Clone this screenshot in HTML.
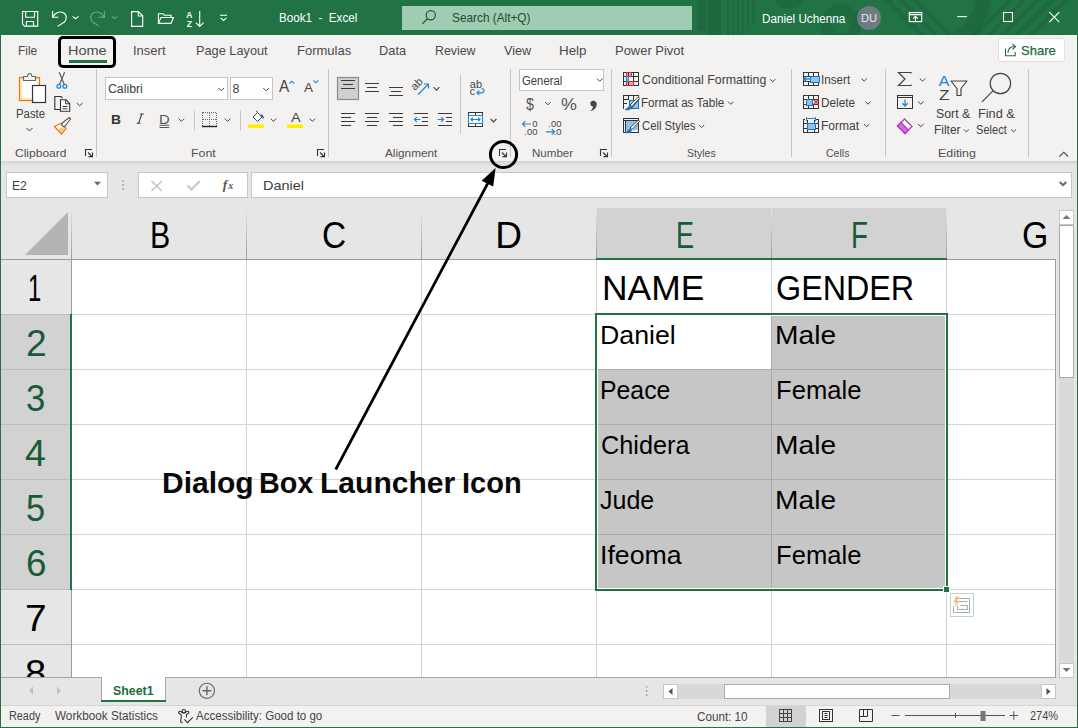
<!DOCTYPE html>
<html><head><meta charset="utf-8">
<style>
*{margin:0;padding:0;box-sizing:border-box}
html,body{width:1078px;height:728px;overflow:hidden;background:#fff;font-family:"Liberation Sans",sans-serif}
.a{position:absolute;display:block}
.t{position:absolute;white-space:pre;line-height:1}
svg{overflow:visible}
</style></head><body>
<div class="a" style="left:0px;top:0px;width:1078px;height:35px;background:#217346;"></div>
<div class="a" style="left:0px;top:35px;width:1078px;height:126px;background:#f3f2f1;"></div>
<div class="a" style="left:0px;top:161px;width:1078px;height:47px;background:#e6e6e6;"></div>
<div class="a" style="left:0px;top:161px;width:1078px;height:5px;background:linear-gradient(#d2d2d2,#e6e6e6);"></div>
<div class="a" style="left:0px;top:208px;width:1078px;height:51px;background:#e6e6e6;"></div>
<div class="a" style="left:0px;top:259px;width:71px;height:418px;background:#e6e6e6;"></div>
<div class="a" style="left:72px;top:260px;width:983px;height:417px;background:#fff;"></div>
<div class="a" style="left:596px;top:208px;width:350px;height:51px;background:#d2d2d2;"></div>
<div class="a" style="left:0px;top:315px;width:71px;height:274px;background:#d2d2d2;"></div>
<div class="a" style="left:72px;top:314px;width:983px;height:1px;background:#d4d4d4;"></div>
<div class="a" style="left:72px;top:369px;width:983px;height:1px;background:#d4d4d4;"></div>
<div class="a" style="left:72px;top:424px;width:983px;height:1px;background:#d4d4d4;"></div>
<div class="a" style="left:72px;top:479px;width:983px;height:1px;background:#d4d4d4;"></div>
<div class="a" style="left:72px;top:534px;width:983px;height:1px;background:#d4d4d4;"></div>
<div class="a" style="left:72px;top:589px;width:983px;height:1px;background:#d4d4d4;"></div>
<div class="a" style="left:72px;top:644px;width:983px;height:1px;background:#d4d4d4;"></div>
<div class="a" style="left:246px;top:260px;width:1px;height:417px;background:#d4d4d4;"></div>
<div class="a" style="left:421px;top:260px;width:1px;height:417px;background:#d4d4d4;"></div>
<div class="a" style="left:596px;top:260px;width:1px;height:417px;background:#d4d4d4;"></div>
<div class="a" style="left:771px;top:260px;width:1px;height:417px;background:#d4d4d4;"></div>
<div class="a" style="left:946px;top:260px;width:1px;height:417px;background:#d4d4d4;"></div>
<div class="a" style="left:71px;top:208px;width:1px;height:51px;background:linear-gradient(#e6e6e6,#9b9b9b);"></div>
<div class="a" style="left:246px;top:208px;width:1px;height:51px;background:linear-gradient(#e6e6e6,#9b9b9b);"></div>
<div class="a" style="left:421px;top:208px;width:1px;height:51px;background:linear-gradient(#e6e6e6,#9b9b9b);"></div>
<div class="a" style="left:596px;top:208px;width:1px;height:51px;background:linear-gradient(#e6e6e6,#9b9b9b);"></div>
<div class="a" style="left:771px;top:208px;width:1px;height:51px;background:linear-gradient(#e6e6e6,#9b9b9b);"></div>
<div class="a" style="left:946px;top:208px;width:1px;height:51px;background:linear-gradient(#e6e6e6,#9b9b9b);"></div>
<div class="a" style="left:0px;top:259px;width:1055px;height:1px;background:#9b9b9b;"></div>
<div class="a" style="left:71px;top:259px;width:1px;height:418px;background:#9b9b9b;"></div>
<div class="a" style="left:0px;top:314px;width:71px;height:1px;background:#bdbdbd;"></div>
<div class="a" style="left:0px;top:369px;width:71px;height:1px;background:#bdbdbd;"></div>
<div class="a" style="left:0px;top:424px;width:71px;height:1px;background:#bdbdbd;"></div>
<div class="a" style="left:0px;top:479px;width:71px;height:1px;background:#bdbdbd;"></div>
<div class="a" style="left:0px;top:534px;width:71px;height:1px;background:#bdbdbd;"></div>
<div class="a" style="left:0px;top:589px;width:71px;height:1px;background:#bdbdbd;"></div>
<div class="a" style="left:0px;top:644px;width:71px;height:1px;background:#bdbdbd;"></div>
<svg class="a" style="left:0px;top:208px;" width="71" height="51" viewBox="0 0 71 51"><polygon points="25,47 68,4 68,47" fill="#b4b4b4"/></svg>
<div class="a" style="left:596px;top:258px;width:351px;height:2px;background:#217346;"></div>
<div class="a" style="left:70px;top:314px;width:2px;height:276px;background:#217346;"></div>
<div class="a" style="left:596px;top:314px;width:351px;height:276px;background:#fff;"></div>
<div class="a" style="left:598px;top:316px;width:347px;height:272px;background:#c6c6c6;"></div>
<div class="a" style="left:597px;top:315px;width:174px;height:54px;background:#fff;"></div>
<div class="a" style="left:598px;top:369px;width:347px;height:1px;background:#ababab;"></div>
<div class="a" style="left:598px;top:424px;width:347px;height:1px;background:#ababab;"></div>
<div class="a" style="left:598px;top:479px;width:347px;height:1px;background:#ababab;"></div>
<div class="a" style="left:598px;top:534px;width:347px;height:1px;background:#ababab;"></div>
<div class="a" style="left:771px;top:316px;width:1px;height:272px;background:#ababab;"></div>
<div class="a" style="left:595px;top:313px;width:353px;height:2px;background:#217346;"></div>
<div class="a" style="left:595px;top:589px;width:353px;height:2px;background:#217346;"></div>
<div class="a" style="left:595px;top:313px;width:2px;height:278px;background:#217346;"></div>
<div class="a" style="left:946px;top:313px;width:2px;height:278px;background:#217346;"></div>
<div class="a" style="left:943px;top:586px;width:7px;height:7px;background:#fff;"></div>
<div class="a" style="left:944px;top:587px;width:5px;height:5px;background:#217346;"></div>
<div class="a" style="left:1055px;top:259px;width:1px;height:419px;background:#9b9b9b;"></div>
<div class="t" style="left:149.54px;top:217.00px;font-size:37.00px;color:#000;transform:scaleX(0.8203);transform-origin:0 0;">B</div>
<div class="t" style="left:322.21px;top:217.00px;font-size:37.00px;color:#000;transform:scaleX(0.9021);transform-origin:0 0;">C</div>
<div class="t" style="left:495.20px;top:217.00px;font-size:37.00px;color:#000;">D</div>
<div class="t" style="left:675.81px;top:217.00px;font-size:37.00px;color:#185c37;transform:scaleX(0.7304);transform-origin:0 0;">E</div>
<div class="t" style="left:850.65px;top:217.00px;font-size:37.00px;color:#185c37;transform:scaleX(0.7503);transform-origin:0 0;">F</div>
<div class="t" style="left:1021.80px;top:217.00px;font-size:37.00px;color:#000;transform:scaleX(0.9149);transform-origin:0 0;">G</div>
<div class="t" style="left:27.93px;top:270.00px;font-size:37.00px;color:#000;transform:scaleX(0.6450);transform-origin:0 0;">1</div>
<div class="t" style="left:25.74px;top:325.00px;font-size:37.00px;color:#185c37;transform:scaleX(1.0059);transform-origin:0 0;">2</div>
<div class="t" style="left:26.21px;top:380.00px;font-size:37.00px;color:#185c37;transform:scaleX(0.9362);transform-origin:0 0;">3</div>
<div class="t" style="left:25.24px;top:435.00px;font-size:37.00px;color:#185c37;transform:scaleX(1.0133);transform-origin:0 0;">4</div>
<div class="t" style="left:26.22px;top:490.00px;font-size:37.00px;color:#185c37;transform:scaleX(0.9296);transform-origin:0 0;">5</div>
<div class="t" style="left:25.64px;top:545.00px;font-size:37.00px;color:#185c37;transform:scaleX(0.9927);transform-origin:0 0;">6</div>
<div class="t" style="left:24.73px;top:600.00px;font-size:37.00px;color:#000;transform:scaleX(1.0489);transform-origin:0 0;">7</div>
<div class="t" style="left:25.46px;top:655.00px;font-size:37.00px;color:#000;transform:scaleX(1.0286);transform-origin:0 0;">8</div>
<div class="t" style="left:601.72px;top:270.00px;font-size:35.00px;color:#000;transform:scaleX(1.0116);transform-origin:0 0;">NAME</div>
<div class="t" style="left:776.38px;top:270.00px;font-size:35.00px;color:#000;transform:scaleX(0.9229);transform-origin:0 0;">GENDER</div>
<div class="t" style="left:600.45px;top:322.00px;font-size:26.40px;color:#000;transform:scaleX(1.0131);transform-origin:0 0;">Daniel</div>
<div class="t" style="left:775.23px;top:322.00px;font-size:26.40px;color:#000;transform:scaleX(1.0673);transform-origin:0 0;">Male</div>
<div class="t" style="left:600.20px;top:377.00px;font-size:26.40px;color:#000;transform:scaleX(0.9399);transform-origin:0 0;">Peace</div>
<div class="t" style="left:776.14px;top:377.00px;font-size:26.40px;color:#000;transform:scaleX(0.9702);transform-origin:0 0;">Female</div>
<div class="t" style="left:601.00px;top:432.00px;font-size:26.40px;color:#000;transform:scaleX(0.9578);transform-origin:0 0;">Chidera</div>
<div class="t" style="left:775.23px;top:432.00px;font-size:26.40px;color:#000;transform:scaleX(1.0673);transform-origin:0 0;">Male</div>
<div class="t" style="left:600.44px;top:487.00px;font-size:26.40px;color:#000;transform:scaleX(0.9474);transform-origin:0 0;">Jude</div>
<div class="t" style="left:775.23px;top:487.00px;font-size:26.40px;color:#000;transform:scaleX(1.0673);transform-origin:0 0;">Male</div>
<div class="t" style="left:599.80px;top:542.00px;font-size:26.40px;color:#000;transform:scaleX(1.0118);transform-origin:0 0;">Ifeoma</div>
<div class="t" style="left:776.14px;top:542.00px;font-size:26.40px;color:#000;transform:scaleX(0.9702);transform-origin:0 0;">Female</div>
<svg class="a" style="left:0px;top:0px;overflow:hidden;" width="1078" height="35" viewBox="0 0 1078 35">
<g fill="#000" fill-opacity="0.085">
<rect x="697" y="0" width="9" height="31"/>
<rect x="708" y="0" width="13" height="35"/>
<rect x="727" y="0" width="2" height="35"/><rect x="732" y="0" width="2" height="35"/>
<rect x="737" y="0" width="2" height="35"/><rect x="742" y="0" width="2" height="35"/>
<rect x="747" y="0" width="2" height="30"/><rect x="752" y="0" width="2" height="25"/>
<path d="M775.5 0 A14 8.5 0 0 0 803.5 0 Z"/>
<circle cx="840.5" cy="24.5" r="14.8" fill="none" stroke="#000" stroke-opacity="0.085" stroke-width="11"/>
<path d="M884 0 L890 0 L925 35 L919 35 Z"/><path d="M898 0 L904 0 L939 35 L933 35 Z"/>
<path d="M912 0 L918 0 L953 35 L947 35 Z"/>
<path d="M976 0 L991 0 C990 14 982 27 975 35 L952 35 C964 25 975 12 976 0 Z"/>
<path d="M1000 7 L1007 0 L1013 0 L978 35 L972 35 Z"/>
<path d="M1021 0 L1027 0 L992 35 L986 35 Z"/>
<path d="M1035 0 L1041 0 L1006 35 L1000 35 Z"/>
<path d="M1049 0 L1055 0 L1020 35 L1014 35 Z"/>
<path d="M1063 0 L1069 0 L1034 35 L1028 35 Z"/>
</g></svg>
<div class="t" style="left:279.10px;top:11.00px;font-size:13.00px;color:#fff;transform:scaleX(0.8958);transform-origin:0 0;">Book1  -  Excel</div>
<div class="a" style="left:402px;top:6px;width:290px;height:24px;background:#9fccb2;"></div>
<svg class="a" style="left:402px;top:0px;" width="50" height="35" viewBox="0 0 50 35"><circle cx="28.8" cy="15.3" r="4.6" fill="none" stroke="#1a5c36" stroke-width="1.2"/><path d="M25.5 18.7 L20.3 23.9" stroke="#1a5c36" stroke-width="1.3"/></svg>
<div class="t" style="left:451.85px;top:11.00px;font-size:13.00px;color:#1b4d31;transform:scaleX(0.9093);transform-origin:0 0;">Search (Alt+Q)</div>
<div class="t" style="left:762.46px;top:13.00px;font-size:12.50px;color:#fff;transform:scaleX(0.9352);transform-origin:0 0;">Daniel Uchenna</div>
<div class="a" style="left:857px;top:6px;width:24px;height:24px;border-radius:50%;background:#6e7b80"></div>
<div class="t" style="left:860.60px;top:13.00px;font-size:10.50px;color:#e8e8e8;transform:scaleX(1.0618);transform-origin:0 0;">DU</div>
<div class="t" style="left:17.62px;top:44.00px;font-size:13.50px;color:#4a4a4a;transform:scaleX(0.8840);transform-origin:0 0;">File</div>
<div class="t" style="left:67.93px;top:44.00px;font-size:13.50px;color:#4a4a4a;transform:scaleX(1.0725);transform-origin:0 0;">Home</div>
<div class="t" style="left:133.32px;top:44.00px;font-size:13.50px;color:#4a4a4a;transform:scaleX(0.9625);transform-origin:0 0;">Insert</div>
<div class="t" style="left:196.46px;top:44.00px;font-size:13.50px;color:#4a4a4a;transform:scaleX(0.9445);transform-origin:0 0;">Page Layout</div>
<div class="t" style="left:297.04px;top:44.00px;font-size:13.50px;color:#4a4a4a;transform:scaleX(0.9622);transform-origin:0 0;">Formulas</div>
<div class="t" style="left:379.45px;top:44.00px;font-size:13.50px;color:#4a4a4a;transform:scaleX(0.9520);transform-origin:0 0;">Data</div>
<div class="t" style="left:435.18px;top:44.00px;font-size:13.50px;color:#4a4a4a;transform:scaleX(0.9153);transform-origin:0 0;">Review</div>
<div class="t" style="left:503.90px;top:44.00px;font-size:13.50px;color:#4a4a4a;transform:scaleX(0.9373);transform-origin:0 0;">View</div>
<div class="t" style="left:558.51px;top:44.00px;font-size:13.50px;color:#4a4a4a;transform:scaleX(0.9905);transform-origin:0 0;">Help</div>
<div class="t" style="left:615.14px;top:44.00px;font-size:13.50px;color:#4a4a4a;transform:scaleX(0.9592);transform-origin:0 0;">Power Pivot</div>
<div class="a" style="left:69px;top:60px;width:38px;height:3px;background:#217346;"></div>
<div class="a" style="left:58px;top:36px;width:58px;height:32px;border:3px solid #000;border-radius:5px"></div>
<div class="a" style="left:998px;top:38px;width:67px;height:24px;border:1px solid #e1dfdd;border-radius:3px;background:#fff"></div>
<svg class="a" style="left:995px;top:36px;" width="30" height="28" viewBox="0 0 30 28"><g fill="none" stroke="#1e6e42" stroke-width="1.1"><path d="M10.5 12.5 V19.8 H20.2 V16"/><path d="M13 17 C13 13 15 10.5 19.5 10.5 M17.5 8 L20.5 10.8 L17.5 13.5"/></g></svg>
<div class="t" style="left:1020.62px;top:44.00px;font-size:13.50px;color:#1d6b40;transform:scaleX(0.9629);transform-origin:0 0;-webkit-text-stroke:0.25px #1d6b40;">Share</div>
<div class="t" style="left:14.88px;top:148.00px;font-size:11.50px;color:#505050;transform:scaleX(1.0452);transform-origin:0 0;">Clipboard</div>
<div class="t" style="left:191.36px;top:148.00px;font-size:11.50px;color:#505050;transform:scaleX(1.0712);transform-origin:0 0;">Font</div>
<div class="t" style="left:385.30px;top:148.00px;font-size:11.50px;color:#505050;transform:scaleX(1.0230);transform-origin:0 0;">Alignment</div>
<div class="t" style="left:531.62px;top:148.00px;font-size:11.50px;color:#505050;transform:scaleX(1.0050);transform-origin:0 0;">Number</div>
<div class="t" style="left:686.94px;top:148.00px;font-size:11.50px;color:#505050;transform:scaleX(0.9148);transform-origin:0 0;">Styles</div>
<div class="t" style="left:826.24px;top:148.00px;font-size:11.50px;color:#505050;transform:scaleX(0.9178);transform-origin:0 0;">Cells</div>
<div class="t" style="left:937.56px;top:148.00px;font-size:11.50px;color:#505050;transform:scaleX(1.0766);transform-origin:0 0;">Editing</div>
<div class="a" style="left:96px;top:69px;width:1px;height:88px;background:#c8c6c4;"></div>
<div class="a" style="left:328px;top:69px;width:1px;height:88px;background:#c8c6c4;"></div>
<div class="a" style="left:510px;top:69px;width:1px;height:88px;background:#c8c6c4;"></div>
<div class="a" style="left:611px;top:69px;width:1px;height:88px;background:#c8c6c4;"></div>
<div class="a" style="left:791px;top:69px;width:1px;height:88px;background:#c8c6c4;"></div>
<div class="a" style="left:885px;top:69px;width:1px;height:88px;background:#c8c6c4;"></div>
<div class="a" style="left:1028px;top:69px;width:1px;height:88px;background:#c8c6c4;"></div>
<div class="t" style="left:15.59px;top:108.00px;font-size:12.50px;color:#404040;transform:scaleX(0.9082);transform-origin:0 0;">Paste</div>
<div class="t" style="left:641.78px;top:74.00px;font-size:12.50px;color:#404040;transform:scaleX(0.9889);transform-origin:0 0;">Conditional Formatting</div>
<div class="t" style="left:641.47px;top:97.00px;font-size:12.50px;color:#404040;transform:scaleX(0.9320);transform-origin:0 0;">Format as Table</div>
<div class="t" style="left:641.84px;top:120.00px;font-size:12.50px;color:#404040;transform:scaleX(0.9034);transform-origin:0 0;">Cell Styles</div>
<div class="t" style="left:821.35px;top:74.00px;font-size:12.50px;color:#404040;transform:scaleX(0.9361);transform-origin:0 0;">Insert</div>
<div class="t" style="left:821.46px;top:97.00px;font-size:12.50px;color:#404040;transform:scaleX(0.9415);transform-origin:0 0;">Delete</div>
<div class="t" style="left:821.44px;top:120.00px;font-size:12.50px;color:#404040;transform:scaleX(0.9605);transform-origin:0 0;">Format</div>
<div class="t" style="left:935.51px;top:108.00px;font-size:12.50px;color:#404040;transform:scaleX(0.9875);transform-origin:0 0;">Sort &amp;</div>
<div class="t" style="left:933.65px;top:124.00px;font-size:12.50px;color:#404040;transform:scaleX(0.9540);transform-origin:0 0;">Filter</div>
<div class="t" style="left:978.28px;top:108.00px;font-size:12.50px;color:#404040;transform:scaleX(1.0200);transform-origin:0 0;">Find &amp;</div>
<div class="t" style="left:976.06px;top:124.00px;font-size:12.50px;color:#404040;transform:scaleX(0.8847);transform-origin:0 0;">Select</div>
<div class="a" style="left:6px;top:172px;width:102px;height:26px;border:1px solid #c6c6c6;background:#fff"></div>
<div class="t" style="left:12.43px;top:180.00px;font-size:12.50px;color:#404040;transform:scaleX(0.9745);transform-origin:0 0;">E2</div>
<div class="a" style="left:138px;top:172px;width:110px;height:26px;border:1px solid #c6c6c6;background:#fff"></div>
<div class="a" style="left:251px;top:172px;width:821px;height:26px;border:1px solid #c6c6c6;background:#fff"></div>
<div class="t" style="left:262.59px;top:179.00px;font-size:13.00px;color:#404040;transform:scaleX(1.1103);transform-origin:0 0;">Daniel</div>
<div class="a" style="left:0px;top:677px;width:1078px;height:28px;background:#e6e6e6;"></div>
<div class="a" style="left:0px;top:677px;width:1078px;height:1px;background:#a6a6a6;"></div>
<div class="a" style="left:0px;top:705px;width:1078px;height:23px;background:#f3f2f1;"></div>
<div class="a" style="left:0px;top:705px;width:1078px;height:1px;background:#d6d6d6;"></div>
<div class="a" style="left:101px;top:677px;width:65px;height:25px;background:#fff;border:1px solid #a6a6a6;border-top:none"></div>
<div class="a" style="left:101px;top:700px;width:65px;height:2px;background:#217346;"></div>
<div class="t" style="left:112.84px;top:684.00px;font-size:13.00px;color:#1d6b40;font-weight:bold;transform:scaleX(0.9504);transform-origin:0 0;">Sheet1</div>
<div class="t" style="left:8.61px;top:710.00px;font-size:12.00px;color:#444;transform:scaleX(0.9033);transform-origin:0 0;">Ready</div>
<div class="t" style="left:55.10px;top:710.00px;font-size:12.00px;color:#444;transform:scaleX(0.9785);transform-origin:0 0;">Workbook Statistics</div>
<div class="t" style="left:196.40px;top:710.00px;font-size:12.00px;color:#444;transform:scaleX(0.9611);transform-origin:0 0;">Accessibility: Good to go</div>
<div class="t" style="left:696.71px;top:711.00px;font-size:12.00px;color:#444;transform:scaleX(0.9721);transform-origin:0 0;">Count: 10</div>
<div class="a" style="left:766px;top:706px;width:40px;height:21px;background:#d2d2d2;"></div>
<div class="t" style="left:161.89px;top:468.00px;font-size:29.50px;color:#0a0a0a;font-weight:bold;transform:scaleX(1.0165);transform-origin:0 0;">Dialog</div>
<div class="t" style="left:259.47px;top:468.00px;font-size:29.50px;color:#0a0a0a;font-weight:bold;transform:scaleX(0.9749);transform-origin:0 0;">Box</div>
<div class="t" style="left:320.19px;top:468.00px;font-size:29.50px;color:#0a0a0a;font-weight:bold;transform:scaleX(1.0184);transform-origin:0 0;">Launcher</div>
<div class="t" style="left:462.15px;top:468.00px;font-size:29.50px;color:#0a0a0a;font-weight:bold;transform:scaleX(0.9842);transform-origin:0 0;">Icon</div>
<svg class="a" style="left:0px;top:0px;" width="240" height="35" viewBox="0 0 240 35">
<g fill="none" stroke="#fff" stroke-width="1.1">
<path d="M22.5 11.5 H37.7 V26.1 H24.5 L22.5 24.1 Z"/>
<path d="M25.7 11.5 V17.2 H34.5 V11.5"/>
<path d="M26.4 26.1 V21.5 H33.5 V26.1"/>
<path d="M52.6 11 V17.2 H58.3"/>
<path d="M52.8 17 C55 12.5 60 10.8 63.5 12.8 C67.5 15.2 66.5 20 64.5 22 L57.5 26.4"/>
<path d="M72.6 16.4 L75.6 18.8 L78.6 16.4"/>
</g>
<g fill="none" stroke="#fff" stroke-opacity="0.35" stroke-width="1.1">
<path d="M104.4 11 V17.2 H98.6"/>
<path d="M104.2 17 C102 12.5 97 10.8 93.5 12.8 C89.5 15.2 90.5 20 92.5 22 L99.5 26.4"/>
<path d="M112 16.4 L114.6 18.6 L117.2 16.4"/>
</g>
<g fill="none" stroke="#fff" stroke-width="1.1">
<path d="M131.6 11.6 H138.5 L142.7 15.8 V26.4 H131.6 Z"/>
<path d="M138.3 11.6 V16 H142.7"/>
<path d="M158.4 23.4 V13.7 H163 L164.3 15.3 H171 V17.3"/>
<path d="M158.4 23.4 L161 17.5 H173.5 L171 23.4 Z"/>
<path d="M199.7 11 V26.5 M195.8 22.6 L199.7 26.5 L203.6 22.6"/>
<path d="M220 15.2 H227 M220.6 17.8 L223.5 20.5 L226.4 17.8"/>
</g>
<g fill="#fff" font-family="Liberation Sans" font-weight="bold" font-size="8.5">
<text x="186.3" y="17.5">A</text><text x="186.8" y="27">Z</text>
</g>
</svg>
<svg class="a" style="left:900px;top:0px;" width="178" height="35" viewBox="0 0 178 35">
<g fill="none" stroke="#fff" stroke-width="1.1">
<rect x="9.3" y="12.6" width="12.4" height="9"/>
<path d="M9.3 14.6 H21.7 M15.5 21.6 V16.5 M13.3 18.5 L15.5 16.3 L17.7 18.5"/>
<path d="M57.2 16.6 H67"/>
<rect x="103.5" y="12.5" width="9" height="9" stroke-width="1"/>
<path d="M149.3 12.2 L159.3 22.2 M159.3 12.2 L149.3 22.2"/>
</g>
</svg>
<svg class="a" style="left:0px;top:0px;" width="1078" height="170" viewBox="0 0 1078 170">
<g fill="none" stroke-width="1">
<!-- paste -->
<rect x="19.5" y="77.5" width="20" height="23" fill="#fdf3d4" stroke="#e8760e" stroke-width="1.2"/>
<rect x="21" y="79" width="17" height="20" fill="#fff" stroke="#f7d77a" stroke-width="1"/>
<path d="M23.5 80.5 V76.5 H27.5 C28 72.5 31.5 72.5 32 76.5 H35.5 V80.5 Z" fill="#f3f2f1" stroke="#666" stroke-width="1.1"/>
<rect x="32.5" y="85.5" width="13" height="17" fill="#fff" stroke="#333" stroke-width="1.2"/>
<path d="M26.5 128 L29.5 131 L32.5 128" stroke="#444"/>
<!-- cut -->
<path d="M59.2 72.3 L64.5 85 M64.6 72.3 L59.3 85" stroke="#555" stroke-width="1.1"/>
<circle cx="58.9" cy="86.3" r="1.9" stroke="#1e88d8" stroke-width="1.3"/>
<circle cx="64.9" cy="86.3" r="1.9" stroke="#1e88d8" stroke-width="1.3"/>
<!-- copy -->
<path d="M60 109.5 H54.8 V96.5 H61 L62.5 98" stroke="#333" stroke-width="1.1"/>
<path d="M60.5 99.8 H66 L69.7 103.5 V111.3 H60.5 Z" fill="#fff" stroke="#333" stroke-width="1.1"/>
<path d="M65.7 99.8 V103.8 H69.7 M62.5 106.5 H67.5 M62.5 108.8 H67.5" stroke="#333"/>
<path d="M76.8 103 L79.7 105.8 L82.6 103" stroke="#444"/>
<!-- format painter -->
<path d="M54.5 126.5 L62 123 L66 128.5 L61.5 134 Z" fill="#fff" stroke="#e8760e" stroke-width="1.3"/>
<path d="M58 129 L62.5 127 L64.5 130 L61.5 133 Z" fill="#f7c48a" stroke="none"/>
<path d="M61.5 125 L63.5 122 L69.5 117.5 L70.5 119 L66 125 L64 127 Z" fill="#fff" stroke="#555" stroke-width="1.1"/>
<!-- launchers -->
<path d="M85.5 149.5 H92.5 V156.5 H85.5 Z M85.5 149.5 V152 M87 151 L91.5 155.5 M91.5 152.5 V155.5 H88.5" stroke="#555" stroke-width="0" />
</g>
</svg>
<div class="a" style="left:105px;top:77px;width:123px;height:23px;border:1px solid #c8c6c4;background:#fff"></div>
<div class="a" style="left:230px;top:77px;width:43px;height:23px;border:1px solid #c8c6c4;background:#fff"></div>
<div class="t" style="left:107.79px;top:83.00px;font-size:12.50px;color:#404040;transform:scaleX(0.9824);transform-origin:0 0;">Calibri</div>
<div class="t" style="left:232.50px;top:83.00px;font-size:12.50px;color:#404040;">8</div>
<div class="t" style="left:279.20px;top:79.00px;font-size:16.00px;color:#444;transform:scaleX(0.9581);transform-origin:0 0;">A</div>
<div class="t" style="left:304.40px;top:82.00px;font-size:12.50px;color:#444;transform:scaleX(1.0746);transform-origin:0 0;">A</div>
<div class="t" style="left:110.80px;top:113.00px;font-size:13.50px;color:#333;font-weight:bold;transform:scaleX(1.0269);transform-origin:0 0;">B</div>
<div class="t" style="left:158.56px;top:113.00px;font-size:13.00px;color:#555;transform:scaleX(1.1429);transform-origin:0 0;">D</div>
<div class="t" style="left:291.00px;top:111.00px;font-size:13.50px;color:#444;transform:scaleX(1.0667);transform-origin:0 0;">A</div>
<svg class="a" style="left:0px;top:0px;" width="1078" height="170" viewBox="0 0 1078 170">
<g fill="none" stroke="#444" stroke-width="1">
<path d="M218.5 88 L221.3 90.8 L224.1 88 M263.3 88 L266.1 90.8 L268.9 88"/>
<path d="M289.5 83.5 L291.8 81.2 L294.1 83.5" stroke="#1e88d8" stroke-width="1.1"/>
<path d="M313.5 80.5 L315.8 82.8 L318.1 80.5" stroke="#1e88d8" stroke-width="1.1"/>
<path d="M159.5 125.3 H169.2 M159.5 127.5 H169.2" stroke="#555"/>
<path d="M178.6 118.6 L181.4 121.4 L184.2 118.6 M224.8 118.6 L227.6 121.4 L230.4 118.6 M270.7 118.6 L273.5 121.4 L276.3 118.6 M309.7 118.6 L312.5 121.4 L315.3 118.6"/>
<path d="M194.5 110.5 V130.5 M240.5 110.5 V130.5" stroke="#c8c6c4"/>
<path d="M139.8 114 H143.8 M136.6 123.2 H140.6 M141.8 114 L138.6 123.2" stroke="#444" stroke-width="1.1"/>
<rect x="202.5" y="112.5" width="14" height="13.5" stroke="#666" stroke-dasharray="1 1" shape-rendering="crispEdges"/>
<path d="M209.5 112.5 V126 M202.5 119.5 H216.5" stroke="#666" stroke-dasharray="1 1" shape-rendering="crispEdges"/>
<path d="M202 126.5 H217" stroke="#222" stroke-width="1.4"/>
<path d="M253 117 L257.5 112.5 L262 117 L257.5 121.5 Z" fill="#fff" stroke="#444"/>
<path d="M256 112 L257.5 110.8" stroke="#444"/>
<path d="M260 116 C262 114.5 263.5 116 263 118.5" stroke="#1e70c0" stroke-width="1.6"/>
</g>
<rect x="248" y="124.4" width="16" height="3.6" fill="#ffef00"/>
<rect x="287" y="124.4" width="16" height="3.6" fill="#ffef00"/>
<!-- launcher icons -->
<g fill="none" stroke="#333" stroke-width="1.1">
<path d="M85.5 156 V149.5 H92 M88 152.5 L92.5 157 M92.5 152.5 V156.6 H88.5"/>
<path d="M317.5 156 V149.5 H324 M320 152.5 L324.5 157 M324.5 152.5 V156.6 H320.5"/>
<path d="M499.5 156 V149.5 H506 M502 152.5 L506.5 157 M506.5 152.5 V156.6 H502.5"/>
<path d="M600.5 156 V149.5 H607 M603 152.5 L607.5 157 M607.5 152.5 V156.6 H603.5"/>
</g>
</svg>
<svg class="a" style="left:0px;top:0px;" width="1078" height="170" viewBox="0 0 1078 170">
<rect x="337.5" y="77.5" width="21" height="22" fill="#d0d0d0" stroke="#8c8c8c" stroke-width="1.2"/>
<g fill="none" stroke="#3a3a3a" stroke-width="1">
<path d="M341 80.5 H355 M343 84.5 H353 M341 88.5 H355"/>
<path d="M365 83.5 H379 M367 87.5 H377 M365 91.5 H379"/>
<path d="M389 87.5 H403 M391 91.5 H401 M389 95.5 H403"/>
<path d="M341 113.5 H355 M341 117.5 H351 M341 121.5 H355 M341 125.5 H351"/>
<path d="M365 113.5 H379 M367 117.5 H377 M365 121.5 H379 M367 125.5 H377"/>
<path d="M389 113.5 H403 M393 117.5 H403 M389 121.5 H403 M393 125.5 H403"/>
<path d="M414 113.5 H428 M422 117.5 H428 M422 121.5 H428 M414 125.5 H428"/>
<path d="M438 113.5 H452 M446 117.5 H452 M446 121.5 H452 M438 125.5 H452"/>
</g>
<g fill="none" stroke="#444" stroke-width="1.1">
<path d="M433.6 87.2 L436.5 90.1 L439.4 87.2 M490.6 119 L493.5 121.9 L496.4 119"/>
</g>
<path d="M460.5 75 V133.5" stroke="#c8c6c4" stroke-width="1"/>
<g fill="none" stroke="#1e88d8" stroke-width="1.2">
<path d="M414.5 119.5 H420.5 M416.8 117.2 L414.5 119.5 L416.8 121.8"/>
<path d="M437.5 119.5 H443.5 M441.2 117.2 L443.5 119.5 L441.2 121.8"/>
<path d="M418 94.5 L428.5 84 M424 84 H428.5 V88.5"/>
</g>
<text x="412" y="88" font-family="Liberation Sans" font-size="11" fill="#444" transform="rotate(-45 417 86)">ab</text>
<g font-family="Liberation Sans" font-size="10.5" fill="#444">
<text x="469.8" y="87.5" textLength="12.2" lengthAdjust="spacingAndGlyphs">ab</text><text x="469.8" y="95">c</text>
</g>
<path d="M481.5 88.5 C484.5 88.5 485 92.8 481.5 92.8 H477 M479.3 90.5 L477 92.8 L479.3 95.1" fill="none" stroke="#1e88d8" stroke-width="1.2"/>
<!-- merge -->
<rect x="468.5" y="112.5" width="14" height="14" fill="#fff" stroke="#333"/>
<path d="M475.5 112.5 V115.5 M475.5 123.5 V126.5" stroke="#333" fill="none"/>
<rect x="468.5" y="115.5" width="14" height="8" fill="#fff" stroke="#1e88d8" stroke-width="1.1"/>
<path d="M471 119.5 H480 M472.8 117.7 L471 119.5 L472.8 121.3 M478.2 117.7 L480 119.5 L478.2 121.3" stroke="#1e88d8" fill="none" stroke-width="1.2"/>
</svg>
<div class="a" style="left:519px;top:69px;width:85px;height:22px;border:1px solid #c8c6c4;background:#fff"></div>
<div class="t" style="left:521.93px;top:75.00px;font-size:12.50px;color:#404040;transform:scaleX(0.9067);transform-origin:0 0;">General</div>
<div class="t" style="left:525.80px;top:96.00px;font-size:17.00px;color:#555;transform:scaleX(0.8329);transform-origin:0 0;">$</div>
<div class="t" style="left:561.08px;top:96.00px;font-size:17.00px;color:#555;transform:scaleX(1.0478);transform-origin:0 0;">%</div>
<svg class="a" style="left:0px;top:0px;" width="1078" height="170" viewBox="0 0 1078 170">
<g fill="none" stroke="#444" stroke-width="1">
<path d="M597 78.5 L599.8 81.3 L602.6 78.5 M545 102 L547.8 104.8 L550.6 102"/>
</g>
<path d="M592 101 C595.5 100 597.5 103 596.5 106 C595.5 109 593 110.5 590 111 C592 109.5 593 108 593 106.5 C590 106.5 589.5 101.5 592 101 Z" fill="#444"/>
<g font-family="Liberation Sans" font-size="9.5" fill="#444" text-anchor="end">
<text x="537.5" y="126.8">0</text><text x="537.5" y="134.8">.00</text>
<text x="561.5" y="126.8">.00</text><text x="561.5" y="134.8">.0</text>
</g>
<g fill="none" stroke="#1e88d8" stroke-width="1.2">
<path d="M522.5 124 H531 M525.3 121.2 L522.5 124 L525.3 126.8"/>
<path d="M546 131.8 H554.5 M551.7 129 L554.5 131.8 L551.7 134.6"/>
</g>
</svg>
<svg class="a" style="left:0px;top:0px;" width="1078" height="170" viewBox="0 0 1078 170">
<g shape-rendering="crispEdges">
<!-- conditional formatting -->
<rect x="626" y="72" width="6" height="4" fill="#f4a0a8"/><rect x="626" y="81" width="8" height="4.5" fill="#f4a0a8"/>
<rect x="626" y="76" width="3" height="5" fill="#8ec3ef"/>
<g fill="none" stroke="#333" stroke-width="1">
<rect x="623.5" y="72.5" width="15" height="13"/>
<path d="M628.5 72.5 V85.5 M633.5 72.5 V85.5 M623.5 76.5 H638.5 M623.5 81.5 H638.5"/>
</g>
<g fill="none" stroke="#e02030" stroke-width="1">
<rect x="626.5" y="72.5" width="5" height="3.5"/><rect x="626.5" y="81.5" width="7" height="4"/>
</g>
<rect x="626.5" y="76.5" width="2" height="4.5" fill="none" stroke="#1e88d8"/>
<!-- format as table -->
<g fill="none" stroke="#333" stroke-width="1">
<path d="M623.5 108.5 V95.5 H638.5 V100 M623.5 99.5 H629 M623.5 103.5 H627 M628.5 95.5 V100 M633.5 95.5 V99.5"/>
</g>
<rect x="629" y="100" width="10" height="9" fill="#8ec3ef"/>
<path d="M629.5 108.5 V100.5 H638.5 V108.5 Z" fill="none" stroke="#1e70c0"/>
<!-- cell styles -->
<rect x="626" y="120.5" width="12" height="9" fill="#8ec3ef"/>
<g fill="none" stroke="#333" stroke-width="1">
<rect x="623.5" y="118.5" width="15" height="13.5"/>
<path d="M623.5 120.5 H638.5 M625.5 120.5 V132"/>
</g>
<!-- insert -->
<g fill="none" stroke="#333" stroke-width="1">
<rect x="803.5" y="72.5" width="15" height="13"/>
<path d="M808.5 72.5 V76 M813.5 72.5 V76 M808.5 81.5 V85.5 M813.5 81.5 V85.5 M803.5 76.5 H810 M803.5 81.5 H810"/>
</g>
<rect x="810" y="76" width="9" height="6" fill="#8ec3ef" stroke="#1e70c0"/>
<!-- delete -->
<g fill="none" stroke="#333" stroke-width="1">
<rect x="803.5" y="95.5" width="15" height="13"/>
<path d="M808.5 95.5 V99 M813.5 95.5 V99 M808.5 104.5 V108.5 M813.5 104.5 V108.5 M803.5 99.5 H818.5 M803.5 104.5 H818.5"/>
</g>
<rect x="806" y="99" width="6" height="6" fill="#8ec3ef" stroke="#1e70c0"/>
<!-- format -->
<g fill="none" stroke="#333" stroke-width="1">
<path d="M803.5 132.5 V119.5 H805 M816 119.5 H818.5 V132.5 H803.5 M803.5 123.5 H818.5 M803.5 128.5 H818.5 M807.5 119.5 V132.5 M814.5 119.5 V132.5"/>
</g>
<rect x="807" y="123" width="8" height="6" fill="#8ec3ef" stroke="#1e70c0"/>
<path d="M806.5 118.5 H815.5 M806.5 116.5 V120.5 M815.5 116.5 V120.5" fill="none" stroke="#1e88d8"/>
<!-- fill -->
<g fill="none" stroke="#333" stroke-width="1">
<path d="M897.5 108.5 V95.5 H912.5 V108.5 Z M897.5 97.5 H912.5"/>
</g>
</g>
<g fill="none" stroke-width="1.2">
<!-- brushes -->
<path d="M628 109 C630 109 632 108 633 106 L639 99" stroke="#444"/>
<path d="M625 109.5 C627 109 628 107 629.5 106 L631.5 107.5 C631 109.5 628 110.5 625 109.5 Z" fill="#1e70c0" stroke="#1e70c0" stroke-width="0.8"/>
<path d="M630 105 L638.5 97 L639.5 98.5 L632 106.5 Z" fill="#fff" stroke="#444" stroke-width="1"/>
<path d="M625 132.5 C627 132 628 130 629.5 129 L631.5 130.5 C631 132.5 628 133.5 625 132.5 Z" fill="#1e70c0" stroke="#1e70c0" stroke-width="0.8"/>
<path d="M630 128 L638.5 120 L639.5 121.5 L632 129.5 Z" fill="#fff" stroke="#444" stroke-width="1"/>
<!-- insert arrow -->
<path d="M804 79 H811 M806.8 76.2 L804 79 L806.8 81.8" stroke="#1e88d8" stroke-width="1.3"/>
<!-- delete X -->
<path d="M813.5 99.5 L818.5 104.5 M818.5 99.5 L813.5 104.5" stroke="#e83040" stroke-width="1.3"/>
<!-- chevrons -->
<path d="M770.2 79.2 L772.8 81.8 L775.4 79.2 M728.2 101.7 L730.8 104.3 L733.4 101.7 M699 125 L701.6 127.6 L704.2 125" stroke="#444" stroke-width="1"/>
<path d="M861.5 78.5 L864.2 81.2 L866.9 78.5 M865.3 101.5 L868 104.2 L870.7 101.5 M864 124 L866.7 126.7 L869.4 124" stroke="#444" stroke-width="1"/>
<path d="M919.8 78.5 L922.5 81.2 L925.2 78.5 M918 101.5 L920.8 104.2 L923.6 101.5 M918 124 L920.8 126.7 L923.6 124" stroke="#444" stroke-width="1"/>
<path d="M964 129.5 L966.4 131.9 L968.8 129.5 M1011.2 129.5 L1013.6 131.9 L1016 129.5" stroke="#444" stroke-width="1"/>
<path d="M1059.5 156.5 L1063.8 152.2 L1068.1 156.5" stroke="#444" stroke-width="1.1"/>
<!-- sigma -->
<path d="M911 73.5 V72.5 H898.5 L905 79 L898.5 85.5 H911 V84.5" stroke="#444" stroke-width="1.2"/>
<!-- fill arrow -->
<path d="M905 99.5 V106 M902.3 103.3 L905 106 L907.7 103.3" stroke="#1e88d8" stroke-width="1.3"/>
<!-- eraser -->
<path d="M897.5 126 L904.5 119 L912 126.5 L905 133.5 Z" fill="#fff" stroke="#b040c0" stroke-width="1.3"/>
<path d="M897.5 126 L901 122.5 L908.5 130 L905 133.5 Z" fill="#d070e0" stroke="#b040c0" stroke-width="1.3"/>
<!-- funnel -->
<path d="M951 81 H967 L961 88.5 V95.5 H957 V88.5 Z" stroke="#444" stroke-width="1.2" stroke-linejoin="round"/>
<!-- find -->
<circle cx="1000.4" cy="83.5" r="10.2" stroke="#444" stroke-width="1.2"/>
<path d="M993.2 90.7 L982 101.9" stroke="#444" stroke-width="1.2"/>
</g>
<text x="938.5" y="85.8" font-family="Liberation Sans" font-size="15" fill="#1e88d8" textLength="11" lengthAdjust="spacingAndGlyphs">A</text>
<text x="939" y="99.5" font-family="Liberation Sans" font-size="15.5" fill="#444" textLength="10.5" lengthAdjust="spacingAndGlyphs">Z</text>
</svg>
<svg class="a" style="left:0px;top:160px;" width="1078" height="50" viewBox="0 0 1078 50">
<path d="M94 21.8 H101 L97.5 25.6 Z" fill="#666"/>
<g fill="#9a9a9a"><circle cx="123" cy="20.8" r="0.9"/><circle cx="123" cy="25" r="0.9"/><circle cx="123" cy="29.2" r="0.9"/></g>
<g fill="none" stroke="#bdbdbd" stroke-width="1.3">
<path d="M151.5 21 L162 31 M162 21 L151.5 31"/>
<path d="M187.5 25.5 L191.5 29.5 L199.8 21" stroke="#c8c8c8" stroke-width="2.2"/>
</g>
<text x="222.8" y="29" font-family="Liberation Serif" font-style="italic" font-weight="bold" font-size="13.5" fill="#555">f</text>
<text x="228.3" y="28.5" font-family="Liberation Serif" font-style="italic" font-weight="bold" font-size="10" fill="#555">x</text>
<path d="M1059.8 22 L1063 25.2 L1066.2 22" fill="none" stroke="#666" stroke-width="2"/>
</svg>
<div class="a" style="left:1056px;top:208px;width:21px;height:470px;background:#e6e6e6;"></div>
<div class="a" style="left:1059px;top:210px;width:15px;height:453px;background:#dadada;"></div>
<div class="a" style="left:1059px;top:210px;width:15px;height:15px;background:#fff;border:1px solid #c6c6c6"></div>
<div class="a" style="left:1059px;top:225px;width:15px;height:153px;background:#fff;border:1px solid #aaa"></div>
<div class="a" style="left:1059px;top:663px;width:15px;height:15px;background:#fff;border:1px solid #c6c6c6"></div>
<svg class="a" style="left:1059px;top:210px;" width="15" height="468" viewBox="0 0 15 468"><path d="M3.5 9 H11.5 L7.5 5 Z" fill="#777"/><path d="M3.5 458 H11.5 L7.5 462 Z" fill="#777"/></svg>
<svg class="a" style="left:640px;top:677px;" width="420" height="28" viewBox="0 0 420 28">
<g fill="#a0a0a0"><circle cx="6.7" cy="9.8" r="0.9"/><circle cx="6.7" cy="14" r="0.9"/><circle cx="6.7" cy="18.2" r="0.9"/></g>
</svg>
<div class="a" style="left:663px;top:684px;width:393px;height:15px;background:#d8d8d8;"></div>
<div class="a" style="left:663px;top:684px;width:15px;height:15px;background:#fff;border:1px solid #c6c6c6"></div>
<div class="a" style="left:724px;top:684px;width:226px;height:15px;background:#fff;border:1px solid #aaa"></div>
<div class="a" style="left:1041px;top:684px;width:15px;height:15px;background:#fff;border:1px solid #c6c6c6"></div>
<svg class="a" style="left:663px;top:684px;" width="400" height="15" viewBox="0 0 400 15"><path d="M9.5 4 V11 L5.5 7.5 Z" fill="#555"/><path d="M383.5 4 V11 L387.5 7.5 Z" fill="#555"/></svg>
<svg class="a" style="left:0px;top:677px;" width="260" height="28" viewBox="0 0 260 28">
<path d="M33 9.5 V17.5 L29 13.5 Z" fill="#c0c0c0"/>
<path d="M57 9.5 V17.5 L61 13.5 Z" fill="#c0c0c0"/>
<circle cx="206.9" cy="13.8" r="7.6" fill="none" stroke="#666" stroke-width="1.1"/>
<path d="M206.9 9.3 V18.3 M202.4 13.8 H211.4" stroke="#666" stroke-width="1.4"/>
</svg>
<svg class="a" style="left:0px;top:705px;" width="1078" height="23" viewBox="0 0 1078 23">
<g fill="none" stroke="#555" stroke-width="1">
<g stroke="#333" stroke-width="1.1">
<circle cx="183.8" cy="6.2" r="1.7"/>
<path d="M181.3 9.5 C179.5 9 178.5 8.5 178.6 7.3 C178.8 6 180.5 6 181.5 7 C182.5 8 185 8 186 7 C187 6 188.8 6 189 7.3 C189.1 8.5 188 9 186.4 9.5 V12.5"/>
<path d="M181.3 9.5 C181.5 11 181.2 13 180.8 15 C180.3 16.8 180.8 17.6 182.5 17.6"/>
<path d="M184.4 14.4 L187.5 17.6 L192.8 12.3"/>
</g>
<rect x="779.5" y="4.5" width="12" height="12" stroke="#444"/>
<path d="M783.5 4.5 V16.5 M787.5 4.5 V16.5 M779.5 8.5 H791.5 M779.5 12.5 H791.5" stroke="#444"/>
<rect x="819.5" y="4.5" width="13" height="12" stroke="#333"/>
<rect x="822.5" y="6.5" width="7" height="8" stroke="#333"/>
<path d="M824.5 8.5 H827.5 M824.5 10.5 H827.5 M824.5 12.5 H827.5" stroke="#333"/>
<path d="M859.5 4.5 H872.5 V16.5 H859.5 Z M859.5 11.5 H867.5 V4.5 M863.5 4.5 V11.5" stroke="#333"/>
<path d="M891.5 10.5 H899.5 M905 10.5 H1005 M955.5 8 V13 M1009.5 10.5 H1018 M1013.8 6.3 V14.7" stroke="#555"/>
</g>
<rect x="980.5" y="6" width="5" height="10" fill="#777"/>
</svg>
<div class="t" style="left:1030.34px;top:710.00px;font-size:12.00px;color:#444;transform:scaleX(0.9109);transform-origin:0 0;">274%</div>
<svg class="a" style="left:950px;top:593px;" width="25" height="25" viewBox="0 0 25 25">
<rect x="0.5" y="0.5" width="23" height="23" fill="#fff" stroke="#b8d8c4"/>
<g fill="none" stroke="#a8a8a8" stroke-width="1">
<path d="M8.5 5.5 H19.5 V19.5 H3.5 V13.5 M8.5 8.5 H17.5 M7.5 12.5 V16.5 H17.5 V12.5 H10.5"/>
</g>
<path d="M6 3.5 L9.5 3.5 L7 8 L9.5 8 L4 14.5 L6 9.5 L3.5 9.5 Z" fill="#f5b77c"/>
</svg>
<svg class="a" style="left:0px;top:0px;pointer-events:none;" width="1078" height="728" viewBox="0 0 1078 728">
<circle cx="503.5" cy="154.5" r="13.1" fill="none" stroke="#000" stroke-width="3"/>
<line x1="335.7" y1="469.5" x2="489" y2="181" stroke="#000" stroke-width="2.7"/>
<path d="M495.6 168 L481.6 180.8 L493.2 186.5 Z" fill="#000"/>
</svg>
<div class="a" style="left:0;top:0;width:1078px;height:728px;border:1px solid #217346;border-top:none;pointer-events:none"></div>
</body></html>
